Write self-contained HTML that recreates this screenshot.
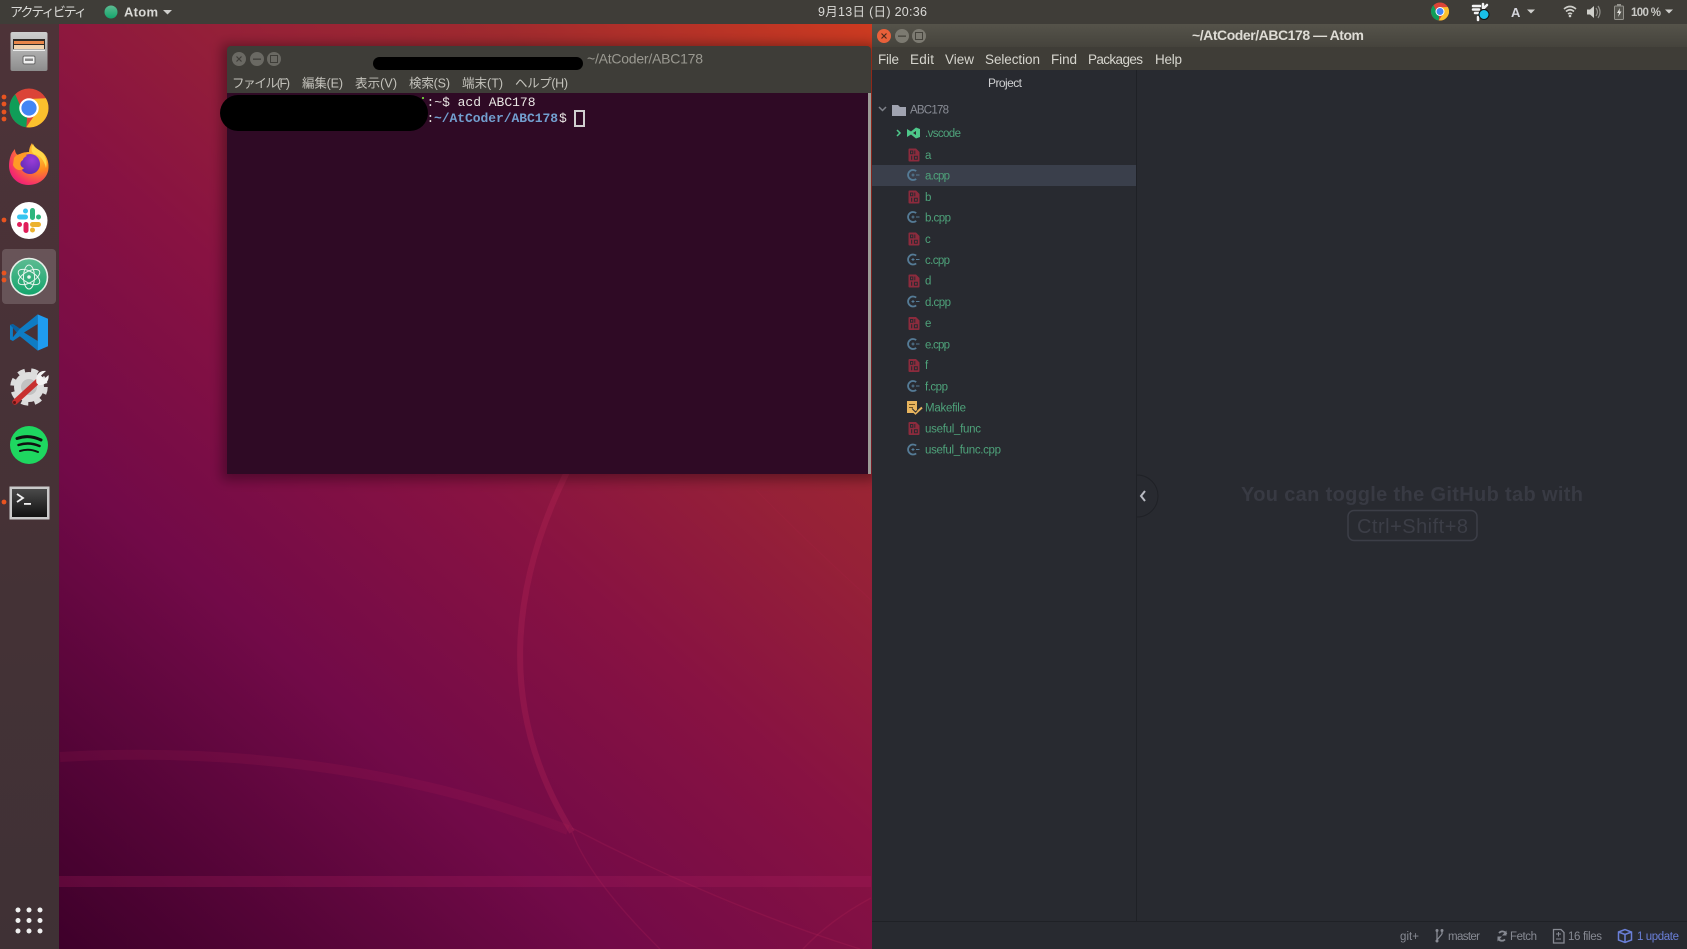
<!DOCTYPE html>
<html lang="ja"><head><meta charset="utf-8"><title>Ubuntu desktop - Atom</title>
<style>
html,body{margin:0;padding:0;width:1687px;height:949px;overflow:hidden;background:#000}
svg{display:block;filter:blur(.35px)}
text{font-family:"Liberation Sans","Noto Sans CJK JP",sans-serif;white-space:pre}
.m{font-family:"Liberation Mono","Noto Sans CJK JP",monospace;font-size:13px}
.tr{font-size:11.5px;fill:#4ea27a}
.st{font-size:11.5px;fill:#878a93}
.tm{font-size:12.5px;fill:#c4c3bc}
.am{font-size:13.5px;fill:#d6d5ce}
.tb{font-size:13px;fill:#d9d9d6}
</style></head><body>
<svg xmlns="http://www.w3.org/2000/svg" width="1687" height="949" viewBox="0 0 1687 949">
<defs>
<linearGradient id="wp" gradientUnits="userSpaceOnUse" x1="60" y1="949" x2="871" y2="24">
<stop offset="0" stop-color="#3e002a"/><stop offset=".3" stop-color="#720a48"/><stop offset=".5" stop-color="#881242"/><stop offset=".65" stop-color="#952038"/><stop offset=".8" stop-color="#a02a2e"/><stop offset="1" stop-color="#cc3a20"/>
</linearGradient>
<linearGradient id="dock" x1="0" y1="0" x2="0" y2="1"><stop offset="0" stop-color="#4d3338"/><stop offset="1" stop-color="#3f3135"/></linearGradient>
<linearGradient id="atb" x1="0" y1="0" x2="0" y2="1"><stop offset="0" stop-color="#55534a"/><stop offset="1" stop-color="#45433c"/></linearGradient>
<linearGradient id="cab" x1="0" y1="0" x2="0" y2="1"><stop offset="0" stop-color="#cfcfcf"/><stop offset="1" stop-color="#8c8c8c"/></linearGradient>
<linearGradient id="atomg" x1="0" y1="0" x2="0" y2="1"><stop offset="0" stop-color="#5dbb92"/><stop offset="1" stop-color="#13a56c"/></linearGradient>
<linearGradient id="term" x1="0" y1="0" x2="0" y2="1"><stop offset="0" stop-color="#4a4a4a"/><stop offset="1" stop-color="#111"/></linearGradient>
<radialGradient id="ff" cx=".75" cy=".2" r="1"><stop offset="0" stop-color="#ffd73a"/><stop offset=".45" stop-color="#ff8a20"/><stop offset=".8" stop-color="#f5306a"/><stop offset="1" stop-color="#e3147e"/></radialGradient>
<radialGradient id="ffp" cx=".6" cy=".3" r=".8"><stop offset="0" stop-color="#9a3cd8"/><stop offset="1" stop-color="#5a2ab0"/></radialGradient>
<filter id="sh" x="-10%" y="-10%" width="120%" height="120%"><feGaussianBlur stdDeviation="6"/></filter>

<symbol id="chrome" viewBox="0 0 100 100">
<circle cx="50" cy="50" r="50" fill="#db4437"/>
<path fill="#0f9d58" d="M14.6 14.6 L30 50 L45 75 L43 99.5 A50 50 0 0 1 14.6 14.6Z"/>
<path fill="#fbc02d" d="M93.3 25 A50 50 0 0 1 43 99.5 L70 60 L50 27Z"/>
<circle cx="50" cy="50" r="25" fill="#fff"/><circle cx="50" cy="50" r="19.5" fill="#4285f4"/>
</symbol>
<symbol id="bin" viewBox="0 0 11 13">
<path fill="#8c2b3d" d="M1 0H7.5L11 3.5V12a1 1 0 0 1-1 1H1a1 1 0 0 1-1-1V1a1 1 0 0 1 1-1Z"/>
<path fill="#282a30" d="M1.500 2H4.800V5.800H1.500ZM5.800 2H6.800V5.800H5.800ZM2.600 7.200H3.700V11.200H2.600ZM5.400 7.200H9.300V11.200H5.400Z"/>
<path fill="#8c2b3d" d="M2.500 3H3.800V4.800H2.500ZM6.500 8.200H8.300V10.200H6.500Z"/>
</symbol>
<symbol id="cpp" viewBox="0 0 13 13">
<path fill="none" stroke="#557b96" stroke-width="1.800" d="M9.200 2.600A5 5 0 1 0 9.200 10.400"/>
<path fill="none" stroke="#557b96" stroke-width="1" d="M4.500 6.500H7.500M6 5V8M9 6.500H12.500"/>
</symbol>
</defs>

<!-- wallpaper -->
<rect x="0" y="0" width="1687" height="949" fill="url(#wp)"/>
<g fill="none" stroke="#c52a5c">
<path stroke-width="6" d="M568 470 C518 570 490 700 572 832" stroke-opacity=".25"/>
<path stroke-width="10" d="M60 757 C220 748 400 765 568 830" stroke-opacity=".12"/>
<path stroke-width="1.400" stroke-opacity=".18" d="M572 832 Q590 880 660 949"/>
<path stroke-width="1.400" stroke-opacity=".18" d="M572 828 Q720 905 860 949"/>
<path stroke-width="1.400" stroke-opacity=".18" d="M803 949 Q830 920 871 898"/>
<path stroke-width="1.200" stroke-opacity=".1" d="M756 490 Q810 545 871 600"/>
</g>
<rect x="59" y="876" width="812" height="11" fill="#b0205f" fill-opacity=".25"/>

<!-- dock -->
<rect x="0" y="24" width="59" height="925" fill="url(#dock)"/>
<rect x="2" y="249" width="54" height="55" rx="4" fill="#fff" fill-opacity=".17"/>
<g fill="#e95420"><circle cx="4" cy="97" r="2.400"/><circle cx="4" cy="104" r="2.400"/><circle cx="4" cy="112" r="2.400"/><circle cx="4" cy="119" r="2.400"/><circle cx="4" cy="220" r="2.400"/><circle cx="4" cy="273" r="2.400"/><circle cx="4" cy="280" r="2.400"/><circle cx="4" cy="502" r="2.400"/></g>
<!-- files -->
<g><rect x="10.500" y="32" width="37" height="39" rx="2" fill="url(#cab)"/><rect x="13" y="39" width="32" height="10" fill="#2f2a26"/><rect x="14" y="41" width="30" height="3" fill="#e8864a"/><rect x="14" y="45" width="30" height="4" fill="#f1d3b0"/><rect x="13" y="50" width="32" height="1" fill="#eee"/><rect x="23" y="56" width="12" height="8" rx="1.500" fill="#f1f1f1" stroke="#666"/><rect x="25" y="58.500" width="8" height="2.500" fill="#888"/></g>
<!-- chrome -->
<use href="#chrome" x="9.500" y="88.500" width="39" height="39"/>
<!-- firefox -->
<g>
<path fill="url(#ff)" d="M28.500 185 C16 185 9 175 9 166 C9 159 11 153 15 149 C15 152 16 154 18 155 C21 153 25 152 29 152 C29 149 30 146 32 143 C33 148 38 149 42 152 C46 155 49 161 48.500 168 C48 178 39 185 28.500 185Z"/>
<circle cx="30" cy="164" r="10" fill="url(#ffp)"/>
<path fill="#ff9a26" d="M14 158 C17 153 24 153 27 156 C24 157 23 159 23 160 C19 162 20 167 24 168 C21 172 15 170 13 165Z"/>
<path fill="#ffd94a" d="M33 144 C35 149 41 150 44 155 C47 160 47 164 46 168 C44 160 40 155 34 154 C31 152 31 148 33 144Z"/>
</g>
<!-- slack -->
<g><circle cx="29" cy="220.500" r="18.500" fill="#fff"/>
<rect x="17" y="214.500" width="11" height="5" rx="2.500" fill="#36c5f0"/><circle cx="25.500" cy="211" r="2.500" fill="#36c5f0"/>
<rect x="30" y="208" width="5" height="12" rx="2.500" fill="#2eb67d"/><circle cx="38.500" cy="217" r="2.500" fill="#2eb67d"/>
<rect x="30" y="222" width="11" height="5" rx="2.500" fill="#ecb22e"/><circle cx="32.500" cy="230" r="2.500" fill="#ecb22e"/>
<rect x="23.500" y="222" width="5" height="11" rx="2.500" fill="#e01e5a"/><circle cx="19.500" cy="224.500" r="2.500" fill="#e01e5a"/></g>
<!-- atom -->
<g><circle cx="29" cy="277" r="18.500" fill="url(#atomg)" stroke="#e8efe9" stroke-width="1.600"/>
<g fill="none" stroke="#e9f5ee" stroke-width="1"><ellipse cx="29" cy="277" rx="12" ry="5.500" transform="rotate(30 29 277)"/><ellipse cx="29" cy="277" rx="12" ry="5.500" transform="rotate(-30 29 277)"/><ellipse cx="29" cy="277" rx="12" ry="5.500" transform="rotate(90 29 277)"/></g><circle cx="29" cy="277" r="1.800" fill="#e9f5ee"/></g>
<!-- vscode -->
<g><path fill="#0e7cc4" fill-rule="evenodd" d="M37.700 314.400 L19.900 328.800 L12.900 324 L10 325 V339.500 L12.900 341 L19.900 336.200 L37.700 350.600 Z M37.700 324 L24 332.500 L37.700 341 Z M12.900 327.700 V337.300 L16.800 332.500 Z"/><path fill="#0a5f9f" d="M10 325 L12.900 324 L19.900 328.800 L16.800 332.500 L12.900 327.700 Z"/><path fill="#1f9cf0" d="M37.700 314.400 L48 318.800 V346.200 L37.700 350.600 Z"/></g>
<!-- tools -->
<g><circle cx="29" cy="387" r="15" fill="#dedede"/><circle cx="29" cy="387" r="16.500" fill="none" stroke="#dcdcdc" stroke-width="4.500" stroke-dasharray="7 6.300"/><circle cx="29" cy="387" r="8" fill="#c2c2c2"/>
<path d="M15 402 L38 381" stroke="#c8302f" stroke-width="5.500" stroke-linecap="round"/><circle cx="14.500" cy="402.500" r="1.500" fill="#611"/>
<path d="M36.500 383 C35 376 39 370 46 371 L41 375.500 L44 379 L48.500 375 C49.500 381 45 386 38.500 385Z" fill="#f2f2f2"/></g>
<!-- spotify -->
<g><circle cx="29" cy="445" r="19" fill="#1ed760"/><g fill="none" stroke="#111" stroke-linecap="round"><path stroke-width="3" d="M17 438.500 Q29 434 41 440"/><path stroke-width="2.500" d="M18.500 445 Q29 441.500 39.500 446"/><path stroke-width="2" d="M20 451 Q29 448 38 452"/></g></g>
<!-- terminal -->
<g><rect x="9.500" y="486.500" width="40" height="33" fill="#c9c9c9"/><rect x="12" y="489" width="35" height="28" fill="url(#term)"/><path d="M17 494 L23 498 L17 502" fill="none" stroke="#f2f2f2" stroke-width="1.800"/><rect x="24" y="503" width="7" height="1.800" fill="#f2f2f2"/></g>
<!-- app grid -->
<g fill="#efefef"><circle cx="18" cy="910" r="2.500"/><circle cx="29" cy="910" r="2.500"/><circle cx="40" cy="910" r="2.500"/><circle cx="18" cy="920.500" r="2.500"/><circle cx="29" cy="920.500" r="2.500"/><circle cx="40" cy="920.500" r="2.500"/><circle cx="18" cy="931" r="2.500"/><circle cx="29" cy="931" r="2.500"/><circle cx="40" cy="931" r="2.500"/></g>

<!-- top bar -->
<rect x="0" y="0" width="1687" height="24" fill="#3f3d38"/>
<text class="tb" x="10" y="16.500" textLength="77">アクティビティ</text>
<circle cx="111" cy="12" r="6.500" fill="url(#atomg)"/>
<text class="tb" x="124" y="16.500" font-weight="700" textLength="34">Atom</text>
<path d="M163 10 H172 L167.500 14.500Z" fill="#cfcfcc"/>
<text x="818" y="16" textLength="109" font-size="12.500" fill="#d9d9d6">9月13日 (日) 20:36</text>
<use href="#chrome" x="1431" y="2.500" width="18" height="18"/>
<g><path d="M1473 6 H1480 M1473 9.500 H1479 M1475 13 H1479 M1478 17 V20 M1483 4 V8 M1487 5 L1484 8" stroke="#f3f3f3" stroke-width="2.500" stroke-linecap="round" fill="none"/><circle cx="1484" cy="14.500" r="5" fill="#19bfe8" stroke="#111"/></g>
<text x="1511" y="17" font-size="13" font-weight="700" fill="#d5d6dc">A</text>
<path d="M1527 9.500 H1535 L1531 13.500Z" fill="#cfcfcc"/>
<g fill="none" stroke="#cfcfca" stroke-width="1.600"><path d="M1564 9 Q1570 4 1576 9"/><path d="M1566 11.500 Q1570 8 1574 11.500"/><path d="M1568 14 Q1570 12.500 1572 14"/></g><circle cx="1570" cy="16" r="1.300" fill="#cfcfca"/>
<path d="M1587 9.500 H1590 L1594 6 V18 L1590 14.500 H1587Z" fill="#cfcfca"/><path d="M1596 8 Q1599 12 1596 16 M1598 6 Q1602 12 1598 18" fill="none" stroke="#8f8e89" stroke-width="1.200"/>
<rect x="1614.500" y="6" width="9" height="13.500" rx="1" fill="#55544e" stroke="#94938d"/><rect x="1617" y="4" width="4" height="2" fill="#94938d"/><path d="M1620 8 L1617 13 H1619 L1618 17 L1621.500 11.500 H1619.500Z" fill="#e5e5e0"/>
<text x="1631" y="16" font-size="11.500" font-weight="700" fill="#c9c9c6" textLength="30">100 %</text>
<path d="M1665 9.500 H1673 L1669 13.500Z" fill="#cfcfcc"/>

<!-- terminal window -->
<rect x="222" y="44" width="654" height="436" fill="#000" fill-opacity=".35" filter="url(#sh)"/>
<path d="M227 50 a4 4 0 0 1 4 -4 H867 a4 4 0 0 1 4 4 V93 H227Z" fill="#3e3d38"/>
<rect x="227" y="93" width="641" height="381" fill="#2f0a25"/>
<rect x="868" y="93" width="3" height="381" fill="#9c9a96"/>
<circle cx="239" cy="59" r="7" fill="#6a6963"/><path d="M236.500 56.500 L241.500 61.500 M241.500 56.500 L236.500 61.500" stroke="#3e3d38" stroke-width="1.200"/>
<circle cx="257" cy="59" r="7" fill="#6a6963"/><rect x="253" y="58.500" width="8" height="1.300" fill="#3e3d38"/>
<circle cx="274" cy="59" r="7" fill="#6a6963"/><rect x="270.500" y="55.500" width="7" height="7" fill="none" stroke="#3e3d38"/>
<text x="587" y="63.500" font-size="14" fill="#9a9991" textLength="116">~/AtCoder/ABC178</text>
<rect x="373" y="57" width="210" height="13" rx="6.500" fill="#000"/>
<text class="tm" x="232" y="87.500" textLength="58">ファイル(F)</text>
<text class="tm" x="302" y="87.500" textLength="41">編集(E)</text>
<text class="tm" x="355" y="87.500" textLength="42">表示(V)</text>
<text class="tm" x="409" y="87.500" textLength="41">検索(S)</text>
<text class="tm" x="462" y="87.500" textLength="41">端末(T)</text>
<text class="tm" x="515" y="87.500" textLength="53">ヘルプ(H)</text>
<text class="m" x="426.500" y="106" fill="#e8e6e3" textLength="109">:~$ acd ABC178</text>
<text class="m" x="426.500" y="122" fill="#e8e6e3" textLength="8">:</text>
<text class="m" x="434" y="122" fill="#729fcf" font-weight="700" textLength="124">~/AtCoder/ABC178</text>
<text class="m" x="559" y="122" fill="#e8e6e3">$</text>
<rect x="575" y="111" width="9" height="15" fill="none" stroke="#d0d0d0" stroke-width="2"/>
<rect x="220" y="95" width="208" height="36" rx="18" fill="#000"/>
<rect x="422" y="97" width="2" height="2" fill="#6bbf3a"/>

<!-- atom window -->
<rect x="872" y="24" width="815" height="925" fill="#282a30"/>
<rect x="872" y="24" width="815" height="23" fill="url(#atb)"/>
<rect x="872" y="47" width="815" height="23" fill="#3f3d37"/>
<circle cx="884" cy="36" r="7" fill="#e8603a"/><path d="M881.500 33.500 L886.500 38.500 M886.500 33.500 L881.500 38.500" stroke="#4d2a1c" stroke-width="1.200"/>
<circle cx="902" cy="36" r="7" fill="#7c7a71"/><rect x="898" y="35.500" width="8" height="1.300" fill="#45433c"/>
<circle cx="919" cy="36" r="7" fill="#7c7a71"/><rect x="915.500" y="32.500" width="7" height="7" fill="none" stroke="#45433c"/>
<text x="1192" y="40" font-size="14" font-weight="700" fill="#dedcd5" textLength="172">~/AtCoder/ABC178 — Atom</text>
<text class="am" x="878" y="64" textLength="21">File</text>
<text class="am" x="910" y="64" textLength="24">Edit</text>
<text class="am" x="945" y="64" textLength="29">View</text>
<text class="am" x="985" y="64" textLength="55">Selection</text>
<text class="am" x="1051" y="64" textLength="26">Find</text>
<text class="am" x="1088" y="64" textLength="55">Packages</text>
<text class="am" x="1155" y="64" textLength="27">Help</text>
<rect x="1136" y="70" width="1" height="851" fill="#1f2126"/>
<text x="988" y="87" font-size="12" fill="#cfd0d2" textLength="34">Project</text>
<path d="M879 107 L882.500 110.500 L886 107" fill="none" stroke="#7f828a" stroke-width="1.500"/>
<path d="M892 105 H898 L900 107 H906 V116 H892Z" fill="#a0a3b0"/>
<text x="910" y="113.500" font-size="11.500" fill="#8a8d96" textLength="39">ABC178</text>
<path d="M897 130 L900 133 L897 136" fill="none" stroke="#4ec88a" stroke-width="1.500"/>
<path d="M907 129 L911 131.500 L916 127.500 L920 129 V137 L916 138.500 L911 134.500 L907 137Z M916 131 L913 133 L916 135Z" fill="#4ec88a" fill-rule="evenodd"/>
<text class="tr" x="925" y="137" textLength="36">.vscode</text>

<rect x="872" y="165" width="264" height="21" fill="#3a3f4b"/>

<use href="#bin" x="908.500" y="148.500" width="11" height="13"/><text class="tr" x="925" y="159" textLength="6.500">a</text>
<use href="#cpp" x="907" y="168.500" width="13" height="13"/><text class="tr" x="925" y="179.500" textLength="25">a.cpp</text>
<use href="#bin" x="908.500" y="190.500" width="11" height="13"/><text class="tr" x="925" y="201" textLength="6.500">b</text>
<use href="#cpp" x="907" y="210.500" width="13" height="13"/><text class="tr" x="925" y="221.500" textLength="26">b.cpp</text>
<use href="#bin" x="908.500" y="232.500" width="11" height="13"/><text class="tr" x="925" y="243" textLength="6">c</text>
<use href="#cpp" x="907" y="253" width="13" height="13"/><text class="tr" x="925" y="264" textLength="25">c.cpp</text>
<use href="#bin" x="908.500" y="274.500" width="11" height="13"/><text class="tr" x="925" y="284.500" textLength="6.500">d</text>
<use href="#cpp" x="907" y="295" width="13" height="13"/><text class="tr" x="925" y="306" textLength="26">d.cpp</text>
<use href="#bin" x="908.500" y="317" width="11" height="13"/><text class="tr" x="925" y="327" textLength="6">e</text>
<use href="#cpp" x="907" y="337.500" width="13" height="13"/><text class="tr" x="925" y="348.500" textLength="25">e.cpp</text>
<use href="#bin" x="908.500" y="359" width="11" height="13"/><text class="tr" x="925" y="369" textLength="3.500">f</text>
<use href="#cpp" x="907" y="379.500" width="13" height="13"/><text class="tr" x="925" y="390.500" textLength="23">f.cpp</text>
<path d="M907 401 H917 V413 H907Z" fill="#e8b45e"/><path d="M909 404.500 H915 M909 407.500 H913" stroke="#6f5020"/><path d="M913 411 L915.500 413.500 L922 407.500" fill="none" stroke="#e8b45e" stroke-width="2"/><path d="M912 408.500 L915.500 412 L917 410.500" fill="none" stroke="#282a30" stroke-width="1"/>
<text class="tr" x="925" y="411.500" textLength="41">Makefile</text>
<use href="#bin" x="908.500" y="422" width="11" height="13"/><text class="tr" x="925" y="432.500" textLength="56">useful_func</text>
<use href="#cpp" x="907" y="443" width="13" height="13"/><text class="tr" x="925" y="453.500" textLength="76">useful_func.cpp</text>

<!-- github tab toggle -->
<path d="M1137 475 A21 21 0 0 1 1137 517" fill="#282a30" stroke="#1f2126"/>
<path d="M1145 491 L1141 496 L1145 501" fill="none" stroke="#b8bac2" stroke-width="2"/>
<text x="1241" y="501" font-size="20" font-weight="700" fill="#383a43" textLength="342">You can toggle the GitHub tab with</text>
<rect x="1348" y="510.500" width="129" height="30" rx="6" fill="none" stroke="#3c3e47" stroke-width="1.500"/>
<text x="1357" y="533" font-size="20" fill="#3c3e47" textLength="111">Ctrl+Shift+8</text>

<!-- status bar -->
<rect x="872" y="921" width="815" height="1" fill="#1f2126"/>
<text class="st" x="1400" y="940" textLength="19">git+</text>
<path d="M1437 931 V940 M1437 940 L1442 934 M1442 931 V934" fill="none" stroke="#878a93" stroke-width="1.300"/><circle cx="1437" cy="930.500" r="1.500" fill="#878a93"/><circle cx="1442" cy="930.500" r="1.500" fill="#878a93"/><circle cx="1437" cy="941" r="1.500" fill="#878a93"/>
<text class="st" x="1448" y="940" textLength="32">master</text>
<path d="M1499 933 A4.500 4.500 0 0 1 1506.500 934 M1505 939.500 A4.500 4.500 0 0 1 1498 938.500" fill="none" stroke="#878a93" stroke-width="1.800"/><path d="M1506.500 930.500 V935.500 H1502Z M1497.500 941.500 V936.500 H1502Z" fill="#878a93"/>
<text class="st" x="1510" y="940" textLength="27">Fetch</text>
<path d="M1553.500 929.500 H1561 L1564 932.500 V943 H1553.500Z" fill="none" stroke="#878a93" stroke-width="1.300"/><path d="M1556 934 H1561 M1558.500 932 V936.500 M1556 939 H1561" stroke="#878a93"/>
<text class="st" x="1568" y="940" textLength="34">16 files</text>
<path d="M1618.500 932 L1625 929.500 L1631.500 932 V940 L1625 942.500 L1618.500 940Z M1618.500 932 L1625 934.500 L1631.500 932 M1625 934.500 V942.500" fill="none" stroke="#6a7fd8" stroke-width="1.500"/>
<text x="1637" y="940" font-size="11.500" fill="#6a7fd8" textLength="42">1 update</text>
</svg>
</body></html>
